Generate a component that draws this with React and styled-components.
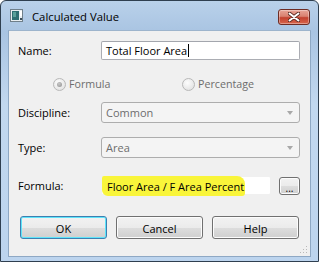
import React from 'react';
import styled, { createGlobalStyle } from 'styled-components';

const GlobalStyle = createGlobalStyle`
  html, body {
    margin: 0;
    padding: 0;
    background: #fff;
  }
  body {
    font-family: "Open Sans", "Noto Sans", sans-serif;
    font-size: 11px;
  }
`;

const Window = styled.div`
  width: 319px;
  height: 262px;
  box-sizing: border-box;
  border: 1px solid #2f3f50;
  border-radius: 6px 6px 0 0;
  background: linear-gradient(180deg, #b9d1ea 0%, #a9c4e2 12%, #c2d8ef 40%, #bcd4ee 100%);
  display: flex;
  flex-direction: column;
  overflow: hidden;
`;

const TitleBar = styled.div`
  height: 29px;
  display: flex;
  align-items: center;
  padding: 0 8px 0 9px;
  gap: 8px;
`;

const TitleText = styled.span`
  flex: 1;
  font-size: 11.3px;
  color: #000;
  padding-top: 2px;
`;

const CloseButton = styled.div`
  width: 30px;
  height: 14px;
  margin-top: 3px;
  border: 1px solid #6d2c24;
  border-radius: 3px;
  background: linear-gradient(180deg, #e8a497 0%, #d98170 45%, #c3412f 55%, #d7664d 100%);
  display: flex;
  align-items: center;
  justify-content: center;
  box-shadow: inset 0 0 0 1px rgba(255, 255, 255, 0.35);
`;

const Client = styled.div`
  flex: 1;
  margin: 0 7px 4px 7px;
  background: #f0f0f0;
  border: 1px solid #8ea8c4;
  border-top-color: #9db4cc;
  padding: 10px 10px 0 9px;
  display: flex;
  flex-direction: column;
  position: relative;
`;

const Row = styled.div`
  display: flex;
  align-items: center;
  height: ${p => p.$h}px;
  margin-top: ${p => p.$mt || 0}px;
`;

const Label = styled.div`
  width: 83px;
  flex-shrink: 0;
  color: #000;
`;

const TextBox = styled.div`
  flex: 1;
  height: 100%;
  box-sizing: border-box;
  background: #fff;
  border: 1px solid #abadb3;
  border-top-color: #a3a6ad;
  border-radius: 2px;
  display: flex;
  align-items: center;
  padding-left: 4px;
  color: #000;
`;

const Caret = styled.span`
  display: inline-block;
  width: 1px;
  height: 13px;
  background: #000;
  margin-left: 1px;
`;

const Combo = styled.div`
  flex: 1;
  height: 100%;
  box-sizing: border-box;
  background: #f4f4f4;
  border: 1px solid #adadad;
  border-radius: 3px;
  display: flex;
  align-items: center;
  justify-content: space-between;
  padding: 0 6px 0 4px;
  color: #6d6d6d;
`;

const Arrow = styled.span`
  width: 0;
  height: 0;
  border-left: 3.5px solid transparent;
  border-right: 3.5px solid transparent;
  border-top: 4px solid #a8a8a8;
`;

const RadioRow = styled.div`
  display: flex;
  align-items: center;
  height: 14px;
  margin-top: 17px;
  padding-left: 35px;
`;

const RadioOption = styled.div`
  display: flex;
  align-items: center;
  gap: 3px;
  color: #6d6d6d;
  font-size: 10.7px;
  width: ${p => p.$w}px;
`;

const RadioCircle = styled.span`
  width: 11px;
  height: 11px;
  border-radius: 50%;
  border: 1px solid #b8b8b8;
  background: radial-gradient(circle at 40% 35%, #fdfdfd 0%, #e6e6e6 70%, #d8d8d8 100%);
  display: flex;
  align-items: center;
  justify-content: center;
  &::after {
    content: '';
    display: ${p => (p.$checked ? 'block' : 'none')};
    width: 5px;
    height: 5px;
    border-radius: 50%;
    background: radial-gradient(circle at 40% 35%, #c8c8c8 0%, #8f8f8f 100%);
  }
`;

const FormulaBox = styled(TextBox)`
  flex: none;
  width: 170px;
  padding-left: 0;
  border-color: #f0f0f0;
  background: #fff;
`;

const Highlight = styled.span`
  background: #f9f53a;
  height: 20px;
  width: 143px;
  margin-top: 1px;
  box-sizing: border-box;
  padding-left: 5px;
  display: flex;
  align-items: center;
  border-radius: 2px 8px 3px 6px;
`;

const SmallButton = styled.div`
  width: 20px;
  height: 16px;
  margin-left: 8px;
  border: 1px solid #707070;
  border-radius: 3px;
  background: linear-gradient(180deg, #f2f2f2 0%, #ebebeb 50%, #dddddd 51%, #cfcfcf 100%);
  box-shadow: inset 0 0 0 1px #fcfcfc;
  display: flex;
  align-items: flex-end;
  justify-content: center;
  font-size: 10px;
  line-height: 12px;
  color: #000;
`;

const ButtonRow = styled.div`
  display: flex;
  gap: 9px;
  margin-top: 21px;
  padding-left: 2px;
`;

const Button = styled.div`
  width: 87px;
  height: 23px;
  box-sizing: border-box;
  border: 1px solid ${p => (p.$default ? '#3c7fb1' : '#707070')};
  border-radius: 3px;
  background: linear-gradient(180deg, #f2f2f2 0%, #ebebeb 50%, #dddddd 51%, #cfcfcf 100%);
  box-shadow: inset 0 0 0 1px ${p => (p.$default ? '#5ee4fa' : '#fcfcfc')};
  display: flex;
  align-items: center;
  justify-content: center;
  padding-top: 1px;
  color: #000;
`;

const Grip = styled.svg`
  position: absolute;
  right: 2px;
  bottom: 2px;
`;

function AppIcon() {
  return (
    <svg width="14" height="13" viewBox="0 0 14 13">
      <rect x="0.5" y="0.5" width="12" height="12" fill="#e8eef2" stroke="#6f7f8a" />
      <rect x="2" y="2" width="7" height="9" fill="#2f6f73" />
      <rect x="3" y="3" width="3" height="5" fill="#5aa09a" />
      <rect x="10" y="2" width="2" height="5" fill="#ffffff" />
      <rect x="10" y="9" width="2" height="2" fill="#3b4d5a" />
    </svg>
  );
}

function CloseIcon() {
  return (
    <svg width="12" height="10" viewBox="0 0 12 10">
      <path d="M1.5 1.5 L10.5 8.5 M10.5 1.5 L1.5 8.5" stroke="#5a2a22" strokeWidth="3.6" strokeLinecap="round" />
      <path d="M1.5 1.5 L10.5 8.5 M10.5 1.5 L1.5 8.5" stroke="#ffffff" strokeWidth="2" strokeLinecap="round" />
    </svg>
  );
}

export default function App() {
  return (
    <>
      <GlobalStyle />
      <Window>
        <TitleBar>
          <AppIcon />
          <TitleText>Calculated Value</TitleText>
          <CloseButton>
            <CloseIcon />
          </CloseButton>
        </TitleBar>
        <Client>
          <Row $h={19}>
            <Label>Name:</Label>
            <TextBox>
              Total Floor Area<Caret />
            </TextBox>
          </Row>
          <RadioRow>
            <RadioOption $w={129}>
              <RadioCircle $checked />
              Formula
            </RadioOption>
            <RadioOption $w={80}>
              <RadioCircle />
              Percentage
            </RadioOption>
          </RadioRow>
          <Row $h={21} $mt={11}>
            <Label>Discipline:</Label>
            <Combo>
              Common
              <Arrow />
            </Combo>
          </Row>
          <Row $h={21} $mt={14}>
            <Label>Type:</Label>
            <Combo>
              Area
              <Arrow />
            </Combo>
          </Row>
          <Row $h={19} $mt={18}>
            <Label>Formula:</Label>
            <FormulaBox>
              <Highlight>Floor Area / F Area Percent</Highlight>
            </FormulaBox>
            <SmallButton>...</SmallButton>
          </Row>
          <ButtonRow>
            <Button $default>OK</Button>
            <Button>Cancel</Button>
            <Button>Help</Button>
          </ButtonRow>
          <Grip width="8" height="8" viewBox="0 0 8 8">
            <g fill="#b9b9b9">
              <rect x="6" y="0" width="1" height="1" />
              <rect x="3" y="3" width="1" height="1" />
              <rect x="6" y="3" width="1" height="1" />
              <rect x="0" y="6" width="1" height="1" />
              <rect x="3" y="6" width="1" height="1" />
              <rect x="6" y="6" width="1" height="1" />
            </g>
          </Grip>
        </Client>
      </Window>
    </>
  );
}
